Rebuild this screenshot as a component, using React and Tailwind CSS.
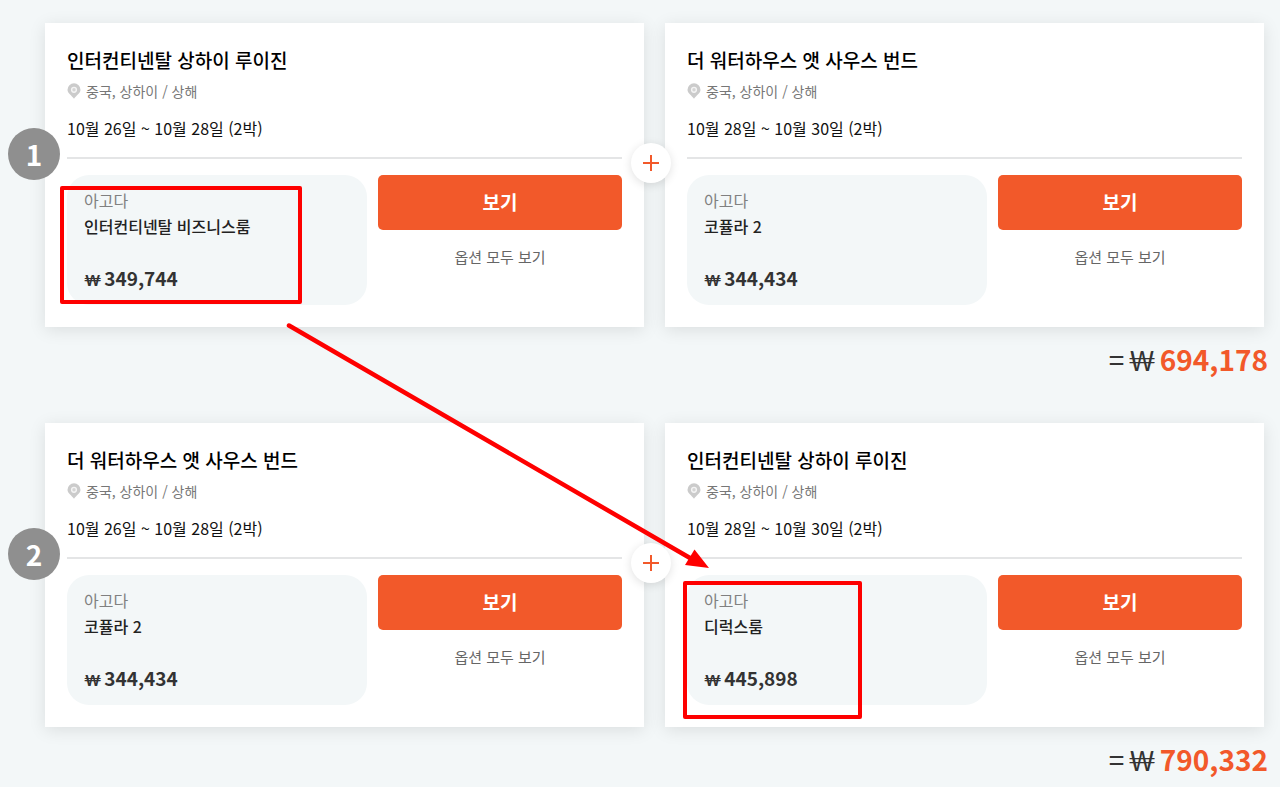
import React from 'react';

const waterhouse = { hotel: '더 워터하우스 앳 사우스 번드', room: '코퓰라 2', price: '344,434' };

const plans = [
  {
    no: 1,
    total: '694,178',
    stays: [
      {
        hotel: '인터컨티넨탈 상하이 루이진',
        dates: '10월 26일 ~ 10월 28일 (2박)',
        room: '인터컨티넨탈 비즈니스룸',
        price: '349,744',
        mark: '-left-[7px] top-[11px] w-[242px] h-[118px]',
      },
      { ...waterhouse, dates: '10월 28일 ~ 10월 30일 (2박)' },
    ],
  },
  {
    no: 2,
    total: '790,332',
    stays: [
      { ...waterhouse, dates: '10월 26일 ~ 10월 28일 (2박)' },
      {
        hotel: '인터컨티넨탈 상하이 루이진',
        dates: '10월 28일 ~ 10월 30일 (2박)',
        room: '디럭스룸',
        price: '445,898',
        mark: '-left-1 top-[6px] w-[179px] h-[138px]',
      },
    ],
  },
];

const PinIcon = () => (
  <svg width="14" height="16" viewBox="0 0 14 16" className="shrink-0" aria-hidden="true">
    <path d="M7 0.300a6.500 6.500 0 0 0-6.500 6.500c0 3.700 4.200 5.500 6.500 9 2.300-3.500 6.500-5.300 6.500-9A6.500 6.500 0 0 0 7 0.300z" fill="#cbcbcb" />
    <circle cx="7" cy="6.8" r="2.4" fill="#d4d4d4" stroke="#f4f4f4" strokeWidth="1.4" />
  </svg>
);

const PlusIcon = () => (
  <svg width="16" height="16" viewBox="0 0 16 16" aria-hidden="true">
    <path d="M8 0v16M0 8h16" stroke="#f2592a" strokeWidth="2" />
  </svg>
);

const StayCard = ({ stay }) => (
  <article className="bg-white px-[22px] pt-[23px] pb-[22px] shadow-[0_3px_16px_rgba(0,0,0,0.1)]">
    <h2 className="text-[19px] leading-7 font-medium text-black">{stay.hotel}</h2>
    <p className="mt-[5px] flex items-center gap-[5px] text-sm leading-6 text-[#777]">
      <PinIcon />
      중국, 상하이 / 상해
    </p>
    <p className="mt-[11px] text-base leading-7 text-[#111]">{stay.dates}</p>
    <hr className="mt-[15px] border-t-2 border-[#e4e5e6]" />
    <div className="mt-4 grid grid-cols-[300fr_244fr] gap-[11px]">
      <div className="relative rounded-[22px] bg-[#f3f7f8] px-[17px] pt-[13px] pb-3">
        <p className="text-base leading-6 text-[#808080]">아고다</p>
        <p className="text-base leading-7 font-medium text-[#222]">{stay.room}</p>
        <p className="mt-6 mb-px flex h-7 items-baseline gap-[3px] text-[19px] leading-7 font-bold text-[#333]">
          <span className="font-['Lato',sans-serif] text-base leading-7">₩</span>
          <span>{stay.price}</span>
        </p>
        {stay.mark && (
          <div className={`absolute rounded-[2px] border-4 border-[#fe0000] ${stay.mark}`} />
        )}
      </div>
      <div className="flex flex-col items-center">
        <button type="button" className="h-[55px] w-full rounded-[5px] bg-[#f2592a] text-[19px] font-bold text-white">
          보기
        </button>
        <a href="#options" className="mt-[15px] text-[15px] leading-6 text-[#666]">
          옵션 모두 보기
        </a>
      </div>
    </div>
  </article>
);

const Plan = ({ plan }) => (
  <section>
    <div className="relative grid grid-cols-2 gap-[21px]">
      {plan.stays.map((stay) => (
        <StayCard key={stay.hotel} stay={stay} />
      ))}
      <span className="absolute -left-[37px] top-[105px] flex size-[52px] items-center justify-center rounded-full bg-[#8f8f8f] text-[28px] font-bold text-white">
        {plan.no}
      </span>
      <span className="absolute left-[calc(50%-24px)] top-[120px] flex size-10 items-center justify-center rounded-full bg-white shadow-[0_2px_10px_rgba(0,0,0,0.12)]">
        <PlusIcon />
      </span>
    </div>
    <p className="-mr-1 mt-3 flex h-10 items-baseline justify-end gap-1 text-[28px] leading-10 text-[#333]">
      <span>=</span>
      <span className="font-['Lato',sans-serif] text-[26px] leading-10">₩</span>
      <strong className="font-bold text-[#f2592a]">{plan.total}</strong>
    </p>
  </section>
);

const App = () => (
  <main
    lang="ko"
    className="relative flex min-h-screen flex-col gap-11 bg-[#f3f7f8] pt-[23px] pr-4 pl-[45px] font-['Noto_Sans_CJK_KR',sans-serif]"
  >
    {plans.map((plan) => (
      <Plan key={plan.no} plan={plan} />
    ))}
    <svg
      width="424"
      height="250"
      viewBox="0 0 424 250"
      className="pointer-events-none absolute left-[286px] top-[322px]"
      aria-hidden="true"
    >
      <path d="M3 3.500L404 236" stroke="#fe0000" strokeWidth="4.500" strokeLinecap="round" />
      <path d="M423 246L399 243L408.500 227.500z" fill="#fe0000" />
    </svg>
  </main>
);

export default App;
